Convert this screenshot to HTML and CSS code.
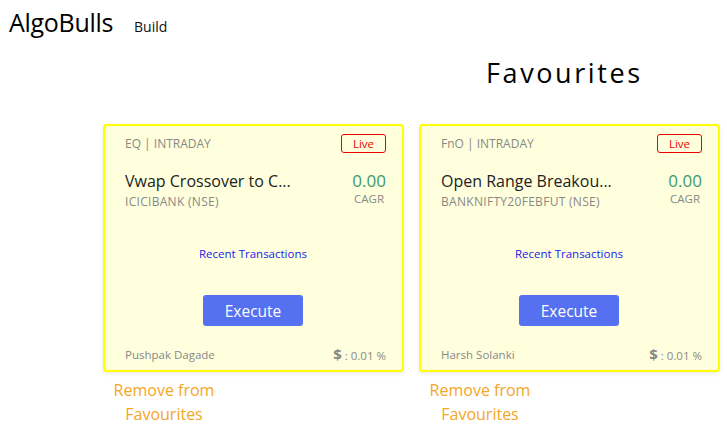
FILE: index.html
```html
<!DOCTYPE html>
<html>
<head>
<meta charset="utf-8">
<link rel="stylesheet" href="styles.css">
</head>
<body>
<header class="topbar">
  <span class="brand">AlgoBulls</span>
  <span class="nav-link">Build</span>
</header>
<h1 class="page-title">Favourites</h1>
<main class="cards">
  <div class="fav">
    <div class="card">
      <div class="row-top">
        <span class="segment">EQ | INTRADAY</span>
        <span class="live">Live</span>
      </div>
      <div class="row-main">
        <div class="names">
          <div class="strategy">Vwap Crossover to C...</div>
          <div class="instrument">ICICIBANK (NSE)</div>
        </div>
        <div class="metric">
          <div class="cagr-value">0.00</div>
          <div class="cagr-label">CAGR</div>
        </div>
      </div>
      <a class="recent">Recent Transactions</a>
      <button class="execute">Execute</button>
      <div class="row-foot">
        <span class="author">Pushpak Dagade</span>
        <span class="fee"><b class="dollar">$</b> : 0.01 %</span>
      </div>
    </div>
    <a class="remove">Remove from Favourites</a>
  </div>
  <div class="fav">
    <div class="card">
      <div class="row-top">
        <span class="segment">FnO | INTRADAY</span>
        <span class="live">Live</span>
      </div>
      <div class="row-main">
        <div class="names">
          <div class="strategy">Open Range Breakou...</div>
          <div class="instrument">BANKNIFTY20FEBFUT (NSE)</div>
        </div>
        <div class="metric">
          <div class="cagr-value">0.00</div>
          <div class="cagr-label">CAGR</div>
        </div>
      </div>
      <a class="recent">Recent Transactions</a>
      <button class="execute">Execute</button>
      <div class="row-foot">
        <span class="author">Harsh Solanki</span>
        <span class="fee"><b class="dollar">$</b> : 0.01 %</span>
      </div>
    </div>
    <a class="remove">Remove from Favourites</a>
  </div>
</main>
</body>
</html>
```
FILE: styles.css
```css
* { box-sizing: border-box; }
body {
  margin: 0;
  font-family: "Open Sans", "Noto Sans", sans-serif;
  color: #111;
  background: #fff;
}
.topbar {
  display: flex;
  align-items: baseline;
  gap: 21px;
  padding: 5px 0 0 9px;
  height: 40px;
}
.brand {
  font-size: 25px;
  letter-spacing: -0.3px;
  color: #000;
}
.nav-link {
  font-size: 14px;
  color: #111;
}
.page-title {
  margin: 16px 0 0 486px;
  font-size: 27px;
  font-weight: 400;
  letter-spacing: 2.6px;
  line-height: 34px;
  height: 34px;
  color: #000;
}
.cards {
  display: flex;
  gap: 16px;
  margin: 34px 0 0 103px;
}
.fav {
  width: 300px;
  display: flex;
  flex-direction: column;
}
.card {
  width: 301px;
  height: 248px;
  border: 2px solid #ffff00;
  border-radius: 4px;
  background: #ffffdd;
  box-shadow: 0 2px 4px rgba(0,0,0,0.08);
  padding: 8px 16px 0 20px;
  display: flex;
  flex-direction: column;
}
.row-top {
  display: flex;
  justify-content: space-between;
  align-items: center;
  height: 19px;
}
.segment {
  font-size: 12px;
  color: #888;
}
.live {
  width: 45px;
  height: 19px;
  border: 1px solid #e00;
  border-radius: 3px;
  color: #e00;
  font-size: 11.5px;
  display: flex;
  align-items: center;
  justify-content: center;
}
.row-main {
  display: flex;
  justify-content: space-between;
  margin-top: 17px;
}
.strategy {
  font-size: 16px;
  line-height: 22px;
  color: #222;
}
.instrument {
  font-size: 12px;
  letter-spacing: 0.3px;
  line-height: 14px;
  margin-top: 3px;
  color: #888;
}
.metric {
  text-align: right;
}
.cagr-value {
  font-size: 17px;
  line-height: 22px;
  color: #3d9970;
}
.cagr-label {
  font-size: 11.5px;
  line-height: 14px;
  color: #888;
  margin-right: 2px;
}
.recent {
  align-self: center;
  margin-top: 37px;
  font-size: 11.5px;
  line-height: 16px;
  color: #1a1aee;
  margin-left: -5px;
}
.execute {
  align-self: center;
  margin: 33px 0 0 -5px;
  width: 100px;
  height: 31px;
  border: none;
  border-radius: 3px;
  background: #5570f0;
  color: #fff;
  font-family: inherit;
  font-size: 15.5px;
  padding: 0;
}
.row-foot {
  display: flex;
  justify-content: space-between;
  align-items: center;
  margin-top: 18px;
  font-size: 11.5px;
  color: #888;
}
.dollar {
  font-size: 15px;
  font-weight: 700;
}
.remove {
  width: 120px;
  margin: 6px 0 0 1px;
  text-align: center;
  font-size: 16px;
  line-height: 24px;
  color: #f5a623;
}
```
